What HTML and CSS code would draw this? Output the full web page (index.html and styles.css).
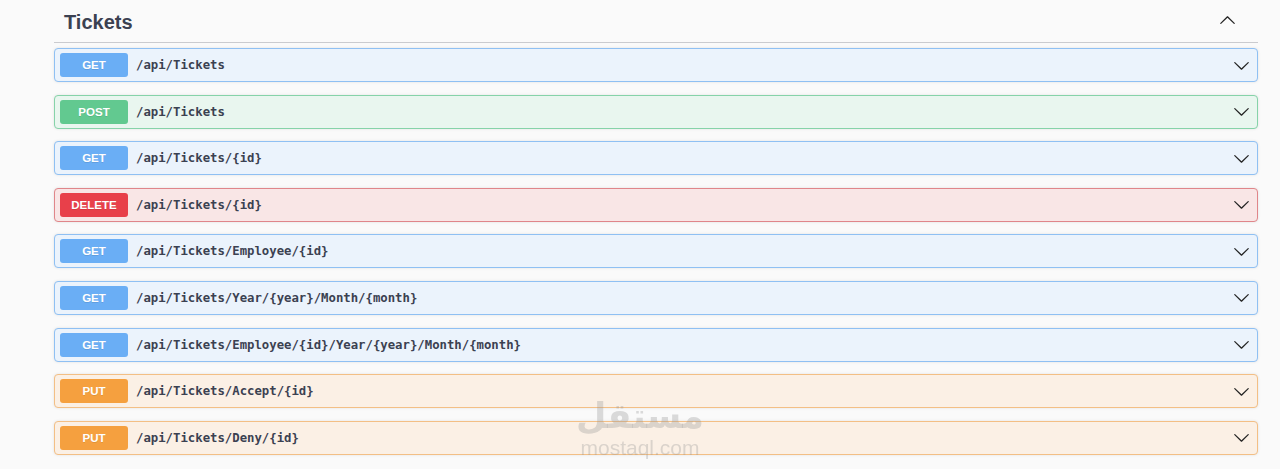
FILE: index.html
```html
<!DOCTYPE html>
<html lang="en">
<head>
  <meta charset="UTF-8">
  <title>Tickets API</title>
  <link rel="stylesheet" href="styles.css">
</head>
<body>

  <!-- TICKETS TAG -->
  <div class="tag-section">
    <h4 class="tag-title">
      <span>Tickets</span>
      <svg class="arrow up" viewBox="0 0 20 20"><path d="M17.418 6.109c.272-.268.709-.268.979 0s.271.701 0 .969l-7.908 7.83c-.27.268-.707.268-.979 0l-7.908-7.83c-.27-.268-.27-.701 0-.969.271-.268.709-.268.979 0L10 13.25l7.418-7.141z"/></svg>
    </h4>

    <div class="opblock get">
      <span class="method">GET</span>
      <span class="path">/api/Tickets</span>
      <svg class="arrow" viewBox="0 0 20 20"><path d="M17.418 6.109c.272-.268.709-.268.979 0s.271.701 0 .969l-7.908 7.83c-.27.268-.707.268-.979 0l-7.908-7.83c-.27-.268-.27-.701 0-.969.271-.268.709-.268.979 0L10 13.25l7.418-7.141z"/></svg>
    </div>

    <div class="opblock post">
      <span class="method">POST</span>
      <span class="path">/api/Tickets</span>
      <svg class="arrow" viewBox="0 0 20 20"><path d="M17.418 6.109c.272-.268.709-.268.979 0s.271.701 0 .969l-7.908 7.83c-.27.268-.707.268-.979 0l-7.908-7.83c-.27-.268-.27-.701 0-.969.271-.268.709-.268.979 0L10 13.25l7.418-7.141z"/></svg>
    </div>

    <div class="opblock get">
      <span class="method">GET</span>
      <span class="path">/api/Tickets/{id}</span>
      <svg class="arrow" viewBox="0 0 20 20"><path d="M17.418 6.109c.272-.268.709-.268.979 0s.271.701 0 .969l-7.908 7.83c-.27.268-.707.268-.979 0l-7.908-7.83c-.27-.268-.27-.701 0-.969.271-.268.709-.268.979 0L10 13.25l7.418-7.141z"/></svg>
    </div>

    <div class="opblock delete">
      <span class="method">DELETE</span>
      <span class="path">/api/Tickets/{id}</span>
      <svg class="arrow" viewBox="0 0 20 20"><path d="M17.418 6.109c.272-.268.709-.268.979 0s.271.701 0 .969l-7.908 7.83c-.27.268-.707.268-.979 0l-7.908-7.83c-.27-.268-.27-.701 0-.969.271-.268.709-.268.979 0L10 13.25l7.418-7.141z"/></svg>
    </div>

    <div class="opblock get">
      <span class="method">GET</span>
      <span class="path">/api/Tickets/Employee/{id}</span>
      <svg class="arrow" viewBox="0 0 20 20"><path d="M17.418 6.109c.272-.268.709-.268.979 0s.271.701 0 .969l-7.908 7.83c-.27.268-.707.268-.979 0l-7.908-7.83c-.27-.268-.27-.701 0-.969.271-.268.709-.268.979 0L10 13.25l7.418-7.141z"/></svg>
    </div>

    <div class="opblock get">
      <span class="method">GET</span>
      <span class="path">/api/Tickets/Year/{year}/Month/{month}</span>
      <svg class="arrow" viewBox="0 0 20 20"><path d="M17.418 6.109c.272-.268.709-.268.979 0s.271.701 0 .969l-7.908 7.83c-.27.268-.707.268-.979 0l-7.908-7.83c-.27-.268-.27-.701 0-.969.271-.268.709-.268.979 0L10 13.25l7.418-7.141z"/></svg>
    </div>

    <div class="opblock get">
      <span class="method">GET</span>
      <span class="path">/api/Tickets/Employee/{id}/Year/{year}/Month/{month}</span>
      <svg class="arrow" viewBox="0 0 20 20"><path d="M17.418 6.109c.272-.268.709-.268.979 0s.271.701 0 .969l-7.908 7.83c-.27.268-.707.268-.979 0l-7.908-7.83c-.27-.268-.27-.701 0-.969.271-.268.709-.268.979 0L10 13.25l7.418-7.141z"/></svg>
    </div>

    <div class="opblock put">
      <span class="method">PUT</span>
      <span class="path">/api/Tickets/Accept/{id}</span>
      <svg class="arrow" viewBox="0 0 20 20"><path d="M17.418 6.109c.272-.268.709-.268.979 0s.271.701 0 .969l-7.908 7.83c-.27.268-.707.268-.979 0l-7.908-7.83c-.27-.268-.27-.701 0-.969.271-.268.709-.268.979 0L10 13.25l7.418-7.141z"/></svg>
    </div>

    <div class="opblock put">
      <span class="method">PUT</span>
      <span class="path">/api/Tickets/Deny/{id}</span>
      <svg class="arrow" viewBox="0 0 20 20"><path d="M17.418 6.109c.272-.268.709-.268.979 0s.271.701 0 .969l-7.908 7.83c-.27.268-.707.268-.979 0l-7.908-7.83c-.27-.268-.27-.701 0-.969.271-.268.709-.268.979 0L10 13.25l7.418-7.141z"/></svg>
    </div>
  </div>

  <!-- WATERMARK -->
  <div class="watermark">
    <div class="wm-ar">مستقل</div>
    <div class="wm-en">mostaql.com</div>
  </div>

</body>
</html>
```

FILE: styles.css
```css
body {
  margin: 0;
  background: #fafafa;
  font-family: "Liberation Sans", Arial, sans-serif;
  color: #3b4151;
}

.tag-section {
  width: 1204px;
  margin-left: 54px;
}

.tag-title {
  display: flex;
  align-items: center;
  justify-content: space-between;
  height: 42px;
  margin: 0 0 5px;
  padding: 0 22px 0 10px;
  border-bottom: 1px solid rgba(59, 65, 81, 0.25);
  font-size: 20px;
  font-weight: bold;
  color: #3b4151;
}

.tag-title span {
  margin-top: 2px;
}

.arrow {
  width: 17px;
  height: 17px;
  fill: #222;
  flex-shrink: 0;
}

.arrow.up {
  transform: rotate(180deg);
  margin-top: -2px;
}

.opblock {
  display: flex;
  align-items: center;
  box-sizing: border-box;
  height: 34px;
  margin-bottom: 12.6px;
  padding: 0 5px;
  border: 1px solid;
  border-radius: 4px;
  box-shadow: 0 0 3px rgba(0, 0, 0, 0.1);
}

.method {
  width: 68px;
  height: 24px;
  line-height: 24px;
  border-radius: 3px;
  text-align: center;
  color: #fff;
  font-size: 11.5px;
  font-weight: bold;
  text-shadow: 0 1px 0 rgba(0, 0, 0, 0.1);
}

.path {
  flex: 1;
  padding-left: 8px;
  font-family: "DejaVu Sans Mono", monospace;
  font-size: 12.3px;
  font-weight: bold;
  color: #3b4151;
}

.opblock .arrow {
  margin-right: 2px;
}

.get {
  background: #ebf3fc;
  border-color: #8fc0f3;
}
.get .method { background: #6aaef5; }

.post {
  background: #e9f6ef;
  border-color: #86d3a9;
}
.post .method { background: #62c990; }

.delete {
  background: #f9e6e6;
  border-color: #e0868a;
}
.delete .method { background: #e8404a; }

.put {
  background: #fbf0e5;
  border-color: #f3bf85;
}
.put .method { background: #f5a03f; }

.watermark {
  position: absolute;
  left: 570px;
  top: 394px;
  width: 140px;
  text-align: center;
  color: rgba(150, 150, 150, 0.32);
  filter: blur(0.4px);
  pointer-events: none;
}

.wm-ar {
  font-family: "DejaVu Sans", sans-serif;
  font-size: 35px;
  font-weight: bold;
  line-height: 44px;
}

.wm-en {
  font-family: "Liberation Sans", Arial, sans-serif;
  font-size: 21px;
  line-height: 20px;
}
```
